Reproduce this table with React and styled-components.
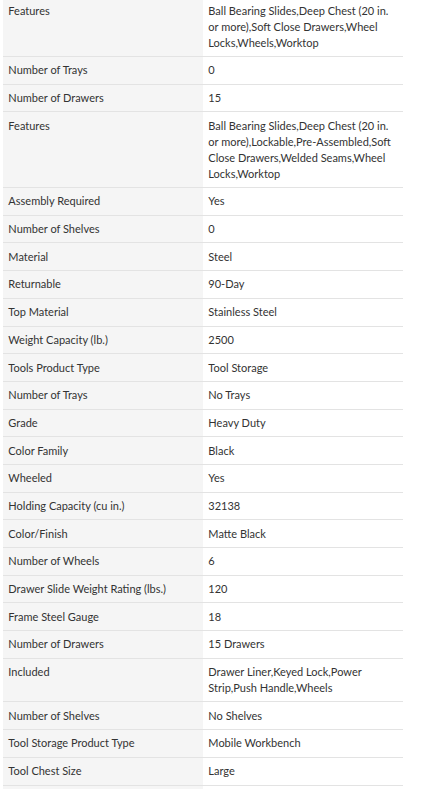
import styled, { createGlobalStyle } from "styled-components";

const GlobalStyle = createGlobalStyle`
  html, body {
    margin: 0;
    padding: 0;
    background: #fff;
  }
  body {
    font-family: "Lato", "Liberation Sans", sans-serif;
    color: #333;
  }
`;

const Page = styled.div`
  padding-left: 3px;
  overflow: hidden;
  height: 789px;
`;

const SpecTable = styled.table`
  width: 400px;
  margin-top: -2.7px;
  border-collapse: collapse;
  table-layout: fixed;
  font-size: 11px;
  line-height: 16px;
`;

const Col = styled.col`
  width: ${(p) => p.$w}px;
`;

const Row = styled.tr`
  border-bottom: 1px solid #e3e3e3;
`;

const Label = styled.th`
  padding: 5.35px;
  background: #f5f5f5;
  font-weight: normal;
  text-align: left;
  vertical-align: top;
`;

const Value = styled.td`
  padding: 5.35px;
  background: #fff;
  vertical-align: top;
`;

const specs = [
  ["Features", "Ball Bearing Slides,Deep Chest (20 in. or more),Soft Close Drawers,Wheel Locks,Wheels,Worktop"],
  ["Number of Trays", "0"],
  ["Number of Drawers", "15"],
  ["Features", "Ball Bearing Slides,Deep Chest (20 in. or more),Lockable,Pre-Assembled,Soft Close Drawers,Welded Seams,Wheel Locks,Worktop"],
  ["Assembly Required", "Yes"],
  ["Number of Shelves", "0"],
  ["Material", "Steel"],
  ["Returnable", "90-Day"],
  ["Top Material", "Stainless Steel"],
  ["Weight Capacity (lb.)", "2500"],
  ["Tools Product Type", "Tool Storage"],
  ["Number of Trays", "No Trays"],
  ["Grade", "Heavy Duty"],
  ["Color Family", "Black"],
  ["Wheeled", "Yes"],
  ["Holding Capacity (cu in.)", "32138"],
  ["Color/Finish", "Matte Black"],
  ["Number of Wheels", "6"],
  ["Drawer Slide Weight Rating (lbs.)", "120"],
  ["Frame Steel Gauge", "18"],
  ["Number of Drawers", "15 Drawers"],
  ["Included", "Drawer Liner,Keyed Lock,Power Strip,Push Handle,Wheels"],
  ["Number of Shelves", "No Shelves"],
  ["Tool Storage Product Type", "Mobile Workbench"],
  ["Tool Chest Size", "Large"],
  ["", ""],
];

export default function App() {
  return (
    <>
      <GlobalStyle />
      <Page>
        <SpecTable>
          <colgroup>
            <Col $w={200} />
            <Col $w={200} />
          </colgroup>
          <tbody>
            {specs.map(([label, value], i) => (
              <Row key={i}>
                <Label>{label}</Label>
                <Value>{value}</Value>
              </Row>
            ))}
          </tbody>
        </SpecTable>
      </Page>
    </>
  );
}
